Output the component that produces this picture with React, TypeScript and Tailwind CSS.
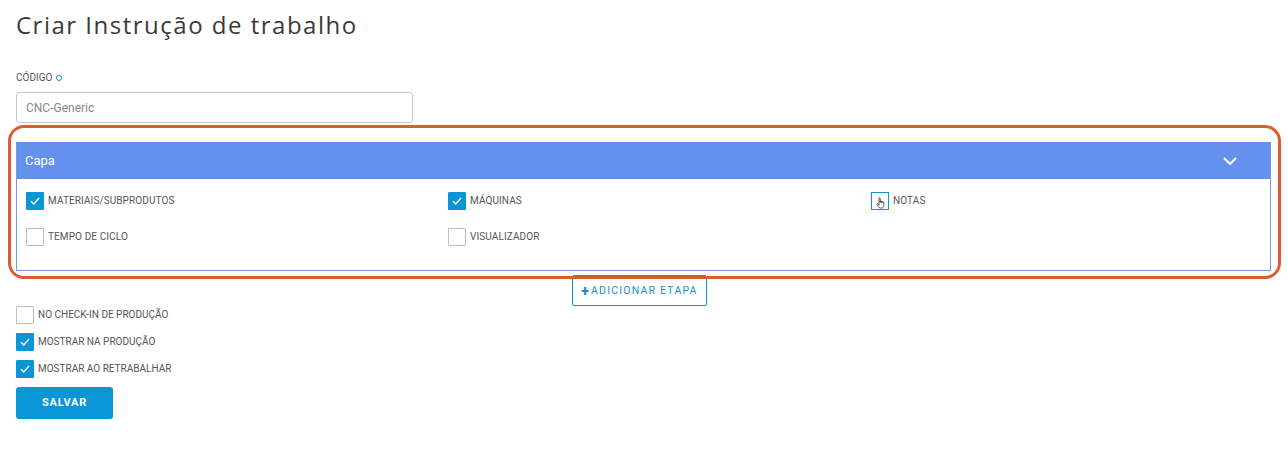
import React from "react";

const font = { fontFamily: '"Roboto", "Liberation Sans", sans-serif' };

function Check({ checked, focused }: { checked?: boolean; focused?: boolean }) {
  if (checked) {
    return (
      <span className="flex h-[18px] w-[18px] shrink-0 items-center justify-center rounded-[1px] bg-[#0a96d6]">
        <svg width="10" height="8" viewBox="0 0 10 8" fill="none">
          <path d="M1 4.2 L3.8 7 L9 1" stroke="white" strokeWidth="1.4" />
        </svg>
      </span>
    );
  }
  if (focused) {
    return (
      <span className="relative flex h-[18px] w-[18px] shrink-0 items-center justify-center border border-[#0a96d6] bg-white">
        <svg width="11" height="12" viewBox="0 0 11 12" fill="none" className="ml-[3px] mt-[3px]">
          <path
            d="M3 1.2 C3 0.5 4.2 0.5 4.2 1.2 L4.2 5.5 L4.2 4.3 C4.2 3.7 5.4 3.7 5.4 4.3 L5.4 5.6 L5.4 4.8 C5.4 4.2 6.6 4.2 6.6 4.8 L6.6 5.8 L6.6 5.3 C6.6 4.8 7.8 4.8 7.8 5.3 L7.8 8.4 C7.8 10 6.8 11 5.4 11 L4.4 11 C3.4 11 2.8 10.4 2.3 9.6 L0.9 7.3 C0.6 6.8 1.3 6.2 1.8 6.8 L3 8.2 Z"
            fill="white"
            stroke="#333"
            strokeWidth="0.8"
            strokeLinejoin="round"
          />
        </svg>
      </span>
    );
  }
  return <span className="h-[18px] w-[18px] shrink-0 rounded-[1px] border border-[#bdbdbd] bg-white" />;
}

function Item({ label, checked, focused }: { label: string; checked?: boolean; focused?: boolean }) {
  return (
    <div className="flex h-[18px] items-center gap-[4px]">
      <Check checked={checked} focused={focused} />
      <span className="text-[10px] uppercase leading-none tracking-[0.1px] text-[#555]">{label}</span>
    </div>
  );
}

export default function App() {
  return (
    <div className="relative min-h-[450px] w-full bg-white px-4" style={font}>
      <h1
        className="pt-[9px] text-[24px] leading-[32px] tracking-[1.5px] text-[#3a3a3a]"
        style={{ fontFamily: '"Open Sans", "Liberation Sans", sans-serif', fontWeight: 400 }}
      >
        Criar Instrução de trabalho
      </h1>

      <div className="mt-[30px] flex items-center gap-[4px] text-[10px] uppercase leading-[14px] text-[#555]">
        <span>Código</span>
        <span className="h-[6px] w-[6px] rounded-full border border-[#0a96d6]" />
      </div>

      <div className="mt-[7px] flex h-[31px] w-[397px] items-center rounded-[3px] border border-[#c8c8c8] px-[9px] text-[12px] text-[#888]">
        CNC-Generic
      </div>

      <div className="mt-[19px] w-[1255px] border border-t-0 border-[#7a9ae6]">
        <div className="flex h-[37px] items-center justify-between bg-[#6591ee] pl-[8px] pr-[33px]">
          <span className="text-[13px] text-white">Capa</span>
          <svg width="14" height="8" viewBox="0 0 14 8" fill="none">
            <path d="M1 1 L7 7 L13 1" stroke="white" strokeWidth="2" />
          </svg>
        </div>
        <div className="grid h-[91px] grid-cols-[422px_423px_1fr] content-start gap-y-[18px] pl-[9px] pt-[13px]">
          <Item label="Materiais/Subprodutos" checked />
          <Item label="Máquinas" checked />
          <Item label="Notas" focused />
          <Item label="Tempo de ciclo" />
          <Item label="Visualizador" />
        </div>
      </div>

      <div className="mt-[4px] pl-[556px]">
        <div className="flex h-[31px] w-[135px] items-center justify-center rounded-[2px] border border-[#0a96d6] text-[10.5px] uppercase tracking-[1.2px] text-[#1a8fd0]">
          <span className="mr-[1px] text-[14px] font-black leading-none">+</span>Adicionar etapa
        </div>
      </div>

      <div className="flex flex-col gap-[9px]">
        <div className="flex items-center gap-[4px]">
          <Check />
          <span className="text-[10px] uppercase leading-none text-[#555]">No check-in de produção</span>
        </div>
        <div className="flex items-center gap-[4px]">
          <Check checked />
          <span className="text-[10px] uppercase leading-none text-[#555]">Mostrar na produção</span>
        </div>
        <div className="flex items-center gap-[4px]">
          <Check checked />
          <span className="text-[10px] uppercase leading-none text-[#555]">Mostrar ao retrabalhar</span>
        </div>
      </div>

      <button className="mt-[9px] flex h-[32px] w-[97px] items-center justify-center rounded-[3px] bg-[#0a96d6] text-[11px] font-bold uppercase tracking-[0.8px] text-white">
        Salvar
      </button>

      <div className="pointer-events-none absolute left-[8px] top-[125px] h-[154px] w-[1273px] rounded-[16px] border-[3px] border-[#dd5b30]" />
    </div>
  );
}
